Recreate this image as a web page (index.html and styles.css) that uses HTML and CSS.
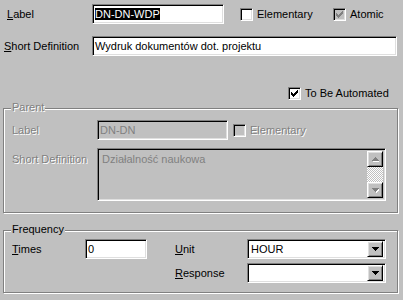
FILE: index.html
```html
<!DOCTYPE html>
<html lang="pl">
<head>
  <meta charset="UTF-8" />
  <title>Function Properties</title>
  <link rel="stylesheet" href="styles.css">
</head>
<body>
  <div class="dialog">
    <div class="row">
      <div class="lbl lbl-label"><u>L</u>abel</div>
      <div class="edit sunken edit-label"><span class="sel">DN-DN-WDP</span></div>
      <div class="check check-elem"><span class="box sunken"></span>Elementary</div>
      <div class="check"><span class="box sunken box-off"><svg width="7" height="7" viewBox="0 0 7 7"><path fill="#808080" d="M0 2H1V3H2V4H3V3H4V2H5V1H6V0H7V3H6V4H5V5H4V6H3V7H2V6H1V5H0Z"/></svg></span>Atomic</div>
    </div>

    <div class="row row-def">
      <div class="lbl lbl-def"><u>S</u>hort Definition</div>
      <div class="edit sunken edit-def">Wydruk dokumentów dot. projektu</div>
    </div>

    <div class="row row-auto">
      <div class="check"><span class="box sunken"><svg width="7" height="7" viewBox="0 0 7 7"><path fill="#000" d="M0 2H1V3H2V4H3V3H4V2H5V1H6V0H7V3H6V4H5V5H4V6H3V7H2V6H1V5H0Z"/></svg></span>To Be Automated</div>
    </div>

    <div class="group group-parent">
      <div class="group-title disabled">Parent</div>
      <div class="parent-grid">
        <div class="lbl disabled">Label</div>
        <div class="edit sunken edit-off">DN-DN</div>
        <div class="check check-pelem disabled"><span class="box sunken box-off"></span>Elementary</div>

        <div class="lbl lbl-top disabled">Short Definition</div>
        <div class="memo sunken">
          <div class="memo-text">Działalność naukowa</div>
          <div class="scroll">
            <span class="btn raised"><svg width="7" height="5" viewBox="0 0 7 5"><path fill="#fff" transform="translate(1 1)" d="M3 0H4V1H5V2H6V3H7V4H0V3H1V2H2V1H3Z"/><path fill="#808080" d="M3 0H4V1H5V2H6V3H7V4H0V3H1V2H2V1H3Z"/></svg></span>
            <span class="track"></span>
            <span class="btn raised"><svg width="7" height="5" viewBox="0 0 7 5"><path fill="#fff" transform="translate(1 1)" d="M0 0H7V1H6V2H5V3H4V4H3V3H2V2H1V1H0Z"/><path fill="#808080" d="M0 0H7V1H6V2H5V3H4V4H3V3H2V2H1V1H0Z"/></svg></span>
          </div>
        </div>
      </div>
    </div>

    <div class="group group-freq">
      <div class="group-title">Frequency</div>
      <div class="freq-grid">
        <div class="lbl"><u>T</u>imes</div>
        <div class="edit sunken">0</div>
        <div></div>
        <div class="lbl"><u>U</u>nit</div>
        <div class="combo sunken">
          <span class="combo-text">HOUR</span>
          <span class="btn raised"><svg width="7" height="4" viewBox="0 0 7 4"><path fill="#000" d="M0 0H7V1H6V2H5V3H4V4H3V3H2V2H1V1H0Z"/></svg></span>
        </div>

        <div class="lbl lbl-resp"><u>R</u>esponse</div>
        <div class="combo sunken">
          <span class="combo-text"></span>
          <span class="btn raised"><svg width="7" height="4" viewBox="0 0 7 4"><path fill="#000" d="M0 0H7V1H6V2H5V3H4V4H3V3H2V2H1V1H0Z"/></svg></span>
        </div>
      </div>
    </div>
  </div>
</body>
</html>
```

FILE: styles.css
```css
* {
  box-sizing: border-box;
}

body {
  margin: 0;
  background: #c0c0c0;
  font: 11px "Liberation Sans", Arial, sans-serif;
  color: #000;
}

.dialog {
  width: 403px;
  height: 300px;
  padding-top: 4px;
  overflow: hidden;
}

/* win95 bevels */
.sunken {
  border: 1px solid;
  border-color: #808080 #fff #fff #808080;
  box-shadow: inset 1px 1px #000, inset -1px -1px #dfdfdf;
  background: #fff;
}

.raised {
  border: 1px solid;
  border-color: #fff #000 #000 #fff;
  box-shadow: inset 1px 1px #dfdfdf, inset -1px -1px #808080;
  background: #c0c0c0;
}

.disabled {
  color: #808080;
  text-shadow: 1px 1px #fff;
}

.row {
  display: flex;
  align-items: center;
  height: 20px;
}

.lbl {
  flex: none;
  white-space: nowrap;
}

.lbl-label {
  width: 92px;
  padding-left: 7px;
}

.lbl-def {
  width: 92px;
  padding-left: 4px;
}

.edit {
  height: 20px;
  padding: 0 2px;
  line-height: 18px;
  white-space: nowrap;
  overflow: hidden;
}

.edit-label {
  width: 132px;
}

.edit-def {
  width: 305px;
}

.sel {
  background: #000;
  color: #fff;
}

.edit-off {
  background: #c0c0c0;
  color: #808080;
}

.row-def {
  margin-top: 12px;
}

.row-auto {
  margin-top: 27px;
  padding-left: 288px;
}

/* checkboxes */
.check {
  display: flex;
  align-items: center;
  gap: 4px;
  white-space: nowrap;
}

.check-elem {
  width: 93px;
  margin-left: 16px;
}

.check-pelem {
  margin-left: 5px;
}

.box {
  display: flex;
  align-items: center;
  justify-content: center;
  width: 13px;
  height: 13px;
  flex: none;
}

.box-off {
  background: #c0c0c0;
}

/* group boxes */
.group {
  position: relative;
  margin-left: 3px;
  width: 395px;
  border: 1px solid #808080;
  box-shadow: inset 1px 1px #fff, 1px 1px #fff;
}

.group-parent {
  margin-top: 5px;
  height: 105px;
}

.group-freq {
  margin-top: 17px;
  height: 63px;
}

.group-title {
  position: absolute;
  top: -8px;
  left: 7px;
  padding: 0 1px;
  line-height: 13px;
  background: #c0c0c0;
}

.parent-grid {
  display: grid;
  grid-template-columns: 85px 131px auto;
  grid-template-rows: 20px 53px;
  row-gap: 8px;
  align-items: center;
  padding: 11px 0 0 8px;
}

.lbl-top {
  align-self: start;
  padding-top: 5px;
}

.memo {
  grid-column: 2 / 4;
  width: 289px;
  height: 53px;
  display: flex;
  padding: 2px;
  background: #c0c0c0;
}

.memo-text {
  flex: 1;
  padding: 2px 2px 0;
  color: #808080;
  line-height: 13px;
}

.scroll {
  display: flex;
  flex-direction: column;
  width: 16px;
}

.btn {
  display: flex;
  align-items: center;
  justify-content: center;
  width: 16px;
  height: 16px;
  flex: none;
}

.track {
  flex: 1;
  background: repeating-conic-gradient(#fff 0 25%, #c0c0c0 0 50%) 0 0 / 2px 2px;
}

.freq-grid {
  display: grid;
  grid-template-columns: 73px 62px 28px 72px 139px;
  grid-template-rows: 20px 20px;
  row-gap: 4px;
  align-items: center;
  padding: 8px 0 0 8px;
}

.lbl-resp {
  grid-column: 4;
}

.combo {
  display: flex;
  align-items: center;
  height: 20px;
  padding: 2px;
}

.combo-text {
  flex: 1;
  padding-left: 1px;
}
```
